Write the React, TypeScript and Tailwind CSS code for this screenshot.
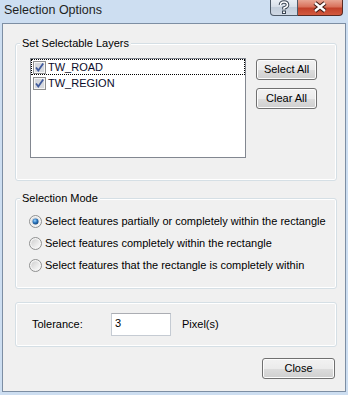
import React from "react";

function Radio({ checked, id }: { checked?: boolean; id: string }) {
  return (
    <svg width="13" height="13" viewBox="0 0 13 13" className="shrink-0">
      <defs>
        <linearGradient id={`rb-${id}`} x1="0" y1="0" x2="1" y2="1">
          <stop offset="0" stopColor="#d0d0d0" />
          <stop offset="1" stopColor="#fbfbfb" />
        </linearGradient>
        <radialGradient id={`rd-${id}`} cx="0.4" cy="0.35" r="0.7">
          <stop offset="0" stopColor="#9fd6ff" />
          <stop offset="0.5" stopColor="#2f79c0" />
          <stop offset="1" stopColor="#0f3e73" />
        </radialGradient>
      </defs>
      <circle cx="6.5" cy="6.5" r="6" fill="#f4f4f4" stroke="#8e8f8f" />
      <circle cx="6.5" cy="6.5" r="4.3" fill={`url(#rb-${id})`} />
      {checked && <circle cx="6.5" cy="6.5" r="3" fill={`url(#rd-${id})`} />}
    </svg>
  );
}

function Check() {
  return (
    <svg width="13" height="13" viewBox="0 0 13 13" className="shrink-0">
      <rect x="0.5" y="0.5" width="12" height="12" fill="#f4f4f4" stroke="#8e8f8f" />
      <rect x="2" y="2" width="9" height="9" fill="#d6d9de" />
      <path d="M3 6.5 L5.3 9.5 L10.2 2.6" fill="none" stroke="#3f5a9c" strokeWidth="1.8" />
    </svg>
  );
}

function WinButton({ label, className }: { label: string; className?: string }) {
  return (
    <button
      className={`h-[21px] rounded-[3px] border border-[#707070] bg-[linear-gradient(#f2f2f2,#ebebeb_50%,#dddddd_50%,#cfcfcf)] shadow-[inset_0_0_0_1px_#fcfcfc] text-[11px] leading-[19px] text-black ${className ?? ""}`}
    >
      {label}
    </button>
  );
}

function Group({ title, className, children }: { title?: string; className?: string; children: React.ReactNode }) {
  return (
    <div
      className={`relative ml-[12px] w-[322px] shrink-0 rounded-[3px] border border-[#d5dfe5] shadow-[inset_0_0_0_1px_#ffffff] ${className ?? ""}`}
    >
      {title && (
        <span className="absolute left-[4px] top-[-8px] bg-[#f0f0f0] px-[2px] leading-[14px]">{title}</span>
      )}
      {children}
    </div>
  );
}

export default function App() {
  const modes = [
    "Select features partially or completely within the rectangle",
    "Select features completely within the rectangle",
    "Select features that the rectangle is completely within",
  ];

  return (
    <div className="flex h-[395px] w-[348px] flex-col bg-[#cddef1] font-['Liberation_Sans',Arial,sans-serif] text-[11px] text-black">
      {/* title bar */}
      <div className="flex h-[23px] shrink-0 items-start">
        <span className="ml-[4px] mt-[2px] text-[12.5px] leading-[16px] text-[#1e1e1e]">Selection Options</span>
        <div className="ml-auto mr-[5px] flex">
          <div className="h-[16px] w-[28px] rounded-bl-[4px] border border-t-0 border-[#4e5a68] bg-[linear-gradient(#e9eef4,#d6dee8_50%,#c3cedb_50%,#cfd8e4)]">
            <svg width="26" height="15" viewBox="0 0 26 15">
              <path d="M9.5 5 Q9.5 2 13 2 Q16.5 2 16.5 5 Q16.5 7 13 8 L13 9.5" fill="none" stroke="#3b4654" strokeWidth="3.6" />
              <path d="M9.5 5 Q9.5 2 13 2 Q16.5 2 16.5 5 Q16.5 7 13 8 L13 9.5" fill="none" stroke="#ffffff" strokeWidth="1.6" />
              <rect x="11" y="10.5" width="4" height="3.5" fill="#3b4654" />
              <rect x="12" y="11.5" width="2" height="1.5" fill="#ffffff" />
            </svg>
          </div>
          <div className="h-[16px] w-[45px] rounded-br-[4px] border border-l-0 border-t-0 border-[#5a2a22] bg-[linear-gradient(#e8a593,#d9725c_45%,#c2412a_55%,#d35a3f)]">
            <svg width="44" height="15" viewBox="0 0 44 15">
              <path d="M17 3 L27 11 M27 3 L17 11" fill="none" stroke="#3d1a14" strokeWidth="4.6" />
              <path d="M17 3 L27 11 M27 3 L17 11" fill="none" stroke="#ffffff" strokeWidth="2.4" />
            </svg>
          </div>
        </div>
      </div>

      {/* client area */}
      <div className="ml-[2px] flex h-[369px] w-[344px] shrink-0 flex-col border border-[#7d8ea3] bg-[#f0f0f0]">
        <Group title="Set Selectable Layers" className="mt-[19px] h-[138px]">
          <div className="flex items-start pl-[14px] pt-[14px]">
            <div className="h-[100px] w-[216px] border border-[#828790] bg-white">
              <div className="flex h-[16px] items-center border border-dotted border-black">
                <span className="ml-[1px]">
                  <Check />
                </span>
                <span className="ml-[2px] leading-[14px] text-[#0b0b2a]">TW_ROAD</span>
              </div>
              <div className="flex h-[16px] items-center px-[1px]">
                <span className="ml-[1px]">
                  <Check />
                </span>
                <span className="ml-[2px] leading-[14px] text-[#0b0b2a]">TW_REGION</span>
              </div>
            </div>
            <div className="ml-[10px] mt-[1px] flex flex-col gap-[8px]">
              <WinButton label="Select All" className="w-[61px]" />
              <WinButton label="Clear All" className="w-[61px]" />
            </div>
          </div>
        </Group>

        <Group title="Selection Mode" className="mt-[17px] h-[91px]">
          <div className="flex flex-col pl-[13px] pt-[11px]">
            {modes.map((m, i) => (
              <div key={m} className="flex h-[22px] items-center gap-[3px]">
                <Radio checked={i === 0} id={`m${i}`} />
                <span className="leading-[14px]">{m}</span>
              </div>
            ))}
          </div>
        </Group>

        <Group className="mt-[13px] flex h-[45px] items-center pl-[16px]">
          <span className="w-[79px]">Tolerance:</span>
          <div className="h-[23px] w-[60px] border border-[#c5cbd3] border-t-[#abadb3] bg-white pl-[3px] pt-[2px] leading-[14px]">
            3
          </div>
          <span className="ml-[11px]">Pixel(s)</span>
        </Group>

        <WinButton label="Close" className="mr-[10px] mt-[11px] w-[73px] self-end" />
      </div>
    </div>
  );
}
